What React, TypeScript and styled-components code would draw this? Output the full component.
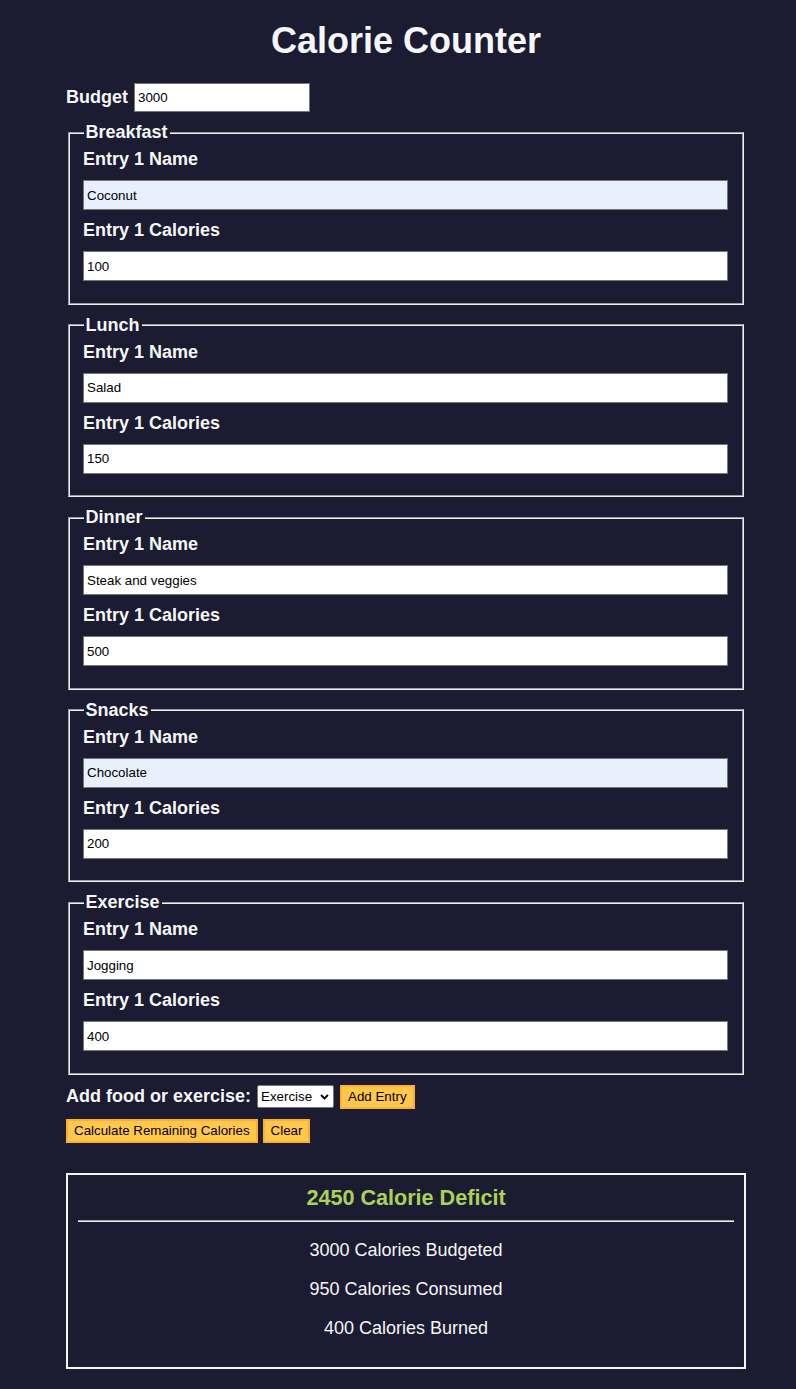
import React from "react";
import styled, { createGlobalStyle } from "styled-components";

const GlobalStyle = createGlobalStyle`
  html, body {
    margin: 0;
    padding: 0;
    background: #1b1b32;
  }
  body {
    color: #f5f6f7;
    font-family: "Liberation Sans", Arial, sans-serif;
    font-size: 18px;
  }
`;

const Page = styled.main`
  padding: 20px 0 21px 66px;
`;

const Container = styled.div`
  width: 680px;
`;

const Title = styled.h1`
  margin: 0 0 20px;
  font-size: 36px;
  font-weight: bold;
  line-height: normal;
  text-align: center;
`;

const Form = styled.form`
  display: flex;
  flex-direction: column;
  gap: 10px;
`;

const InlineRow = styled.div<{ $gap: number; $height?: number }>`
  display: flex;
  align-items: center;
  gap: ${(p) => p.$gap}px;
  ${(p) => (p.$height ? `height: ${p.$height}px;` : "")}
`;

const InlineLabel = styled.label`
  font-weight: bold;
  line-height: normal;
`;

const fieldFont = `
  font-family: "Liberation Sans", Arial, sans-serif;
  font-size: 13.33px;
  color: #000;
`;

const BudgetInput = styled.input`
  ${fieldFont}
  width: 176px;
  height: 29px;
  box-sizing: border-box;
  padding: 0 3px;
  border: 1px solid #767676;
  background: #fff;
  outline: none;
`;

const Group = styled.fieldset`
  margin: 0 2px;
  padding: 6.3px 14px 11.25px 13px;
  border: 2px groove #f0f0f0;
  min-width: 0;
`;

const GroupLegend = styled.legend`
  padding: 0 2px;
  margin-left: 0.5px;
  font-weight: bold;
  line-height: normal;
`;

const EntryLabel = styled.label`
  display: block;
  font-weight: bold;
  line-height: normal;
`;

const EntryInput = styled.input<{ $filled?: boolean }>`
  ${fieldFont}
  display: block;
  width: 100%;
  height: 30px;
  box-sizing: border-box;
  margin: 10px 0;
  padding: 0 3px;
  border: 1px solid #767676;
  background: ${(p) => (p.$filled ? "#e8f0fe" : "#fff")};
  outline: none;
`;

const SelectWrap = styled.span`
  position: relative;
  display: inline-flex;
`;

const Select = styled.select`
  ${fieldFont}
  appearance: none;
  width: 77px;
  height: 23px;
  box-sizing: border-box;
  padding: 0 16px 0 3px;
  border: 1px solid #767676;
  border-radius: 2px;
  background: #fff;
  outline: none;
`;

const Chevron = styled.svg`
  position: absolute;
  right: 5px;
  top: 9px;
  pointer-events: none;
`;

const Button = styled.button`
  ${fieldFont}
  height: 24px;
  box-sizing: border-box;
  padding: 0 6px;
  border: 2px solid #feac32;
  background: #ffc74b;
  cursor: pointer;
`;

const Output = styled.div`
  margin-top: 30px;
  border: 2px solid #f5f6f7;
  padding: 10px;
  text-align: center;
`;

const Headline = styled.div`
  font-size: 21.6px;
  font-weight: bold;
  line-height: normal;
  color: #acd157;
`;

const Divider = styled.hr`
  margin: 9px 0;
  height: 0;
  border: none;
  border-top: 1px solid #a0a0a0;
  border-bottom: 1px solid #eeeeee;
`;

const Stat = styled.p`
  margin: 18px 0;
  line-height: normal;
`;

const meals = [
  { legend: "Breakfast", name: "Coconut", calories: "100", filled: true },
  { legend: "Lunch", name: "Salad", calories: "150", filled: false },
  { legend: "Dinner", name: "Steak and veggies", calories: "500", filled: false },
  { legend: "Snacks", name: "Chocolate", calories: "200", filled: true },
  { legend: "Exercise", name: "Jogging", calories: "400", filled: false },
];

export default function App() {
  return (
    <>
      <GlobalStyle />
      <Page>
        <Container>
          <Title>Calorie Counter</Title>
          <Form onSubmit={(e) => e.preventDefault()}>
            <InlineRow $gap={6} $height={30}>
              <InlineLabel htmlFor="budget">Budget</InlineLabel>
              <BudgetInput id="budget" type="text" defaultValue="3000" />
            </InlineRow>
            {meals.map((m) => {
              const id = m.legend.toLowerCase();
              return (
                <Group key={m.legend}>
                  <GroupLegend>{m.legend}</GroupLegend>
                  <EntryLabel htmlFor={`${id}-1-name`}>Entry 1 Name</EntryLabel>
                  <EntryInput
                    id={`${id}-1-name`}
                    type="text"
                    defaultValue={m.name}
                    $filled={m.filled}
                  />
                  <EntryLabel htmlFor={`${id}-1-calories`}>Entry 1 Calories</EntryLabel>
                  <EntryInput id={`${id}-1-calories`} type="text" defaultValue={m.calories} />
                </Group>
              );
            })}
            <InlineRow $gap={6}>
              <InlineLabel htmlFor="entry-dropdown">Add food or exercise:</InlineLabel>
              <SelectWrap>
                <Select id="entry-dropdown" defaultValue="exercise">
                  <option value="breakfast">Breakfast</option>
                  <option value="lunch">Lunch</option>
                  <option value="dinner">Dinner</option>
                  <option value="snacks">Snacks</option>
                  <option value="exercise">Exercise</option>
                </Select>
                <Chevron width="9" height="6" viewBox="0 0 9 6">
                  <path d="M1 1 L4.5 4.5 L8 1" fill="none" stroke="#000" strokeWidth="1.8" />
                </Chevron>
              </SelectWrap>
              <Button type="button">Add Entry</Button>
            </InlineRow>
            <InlineRow $gap={5}>
              <Button type="submit">Calculate Remaining Calories</Button>
              <Button type="button">Clear</Button>
            </InlineRow>
          </Form>
          <Output>
            <Headline>2450 Calorie Deficit</Headline>
            <Divider />
            <Stat>3000 Calories Budgeted</Stat>
            <Stat>950 Calories Consumed</Stat>
            <Stat>400 Calories Burned</Stat>
          </Output>
        </Container>
      </Page>
    </>
  );
}
